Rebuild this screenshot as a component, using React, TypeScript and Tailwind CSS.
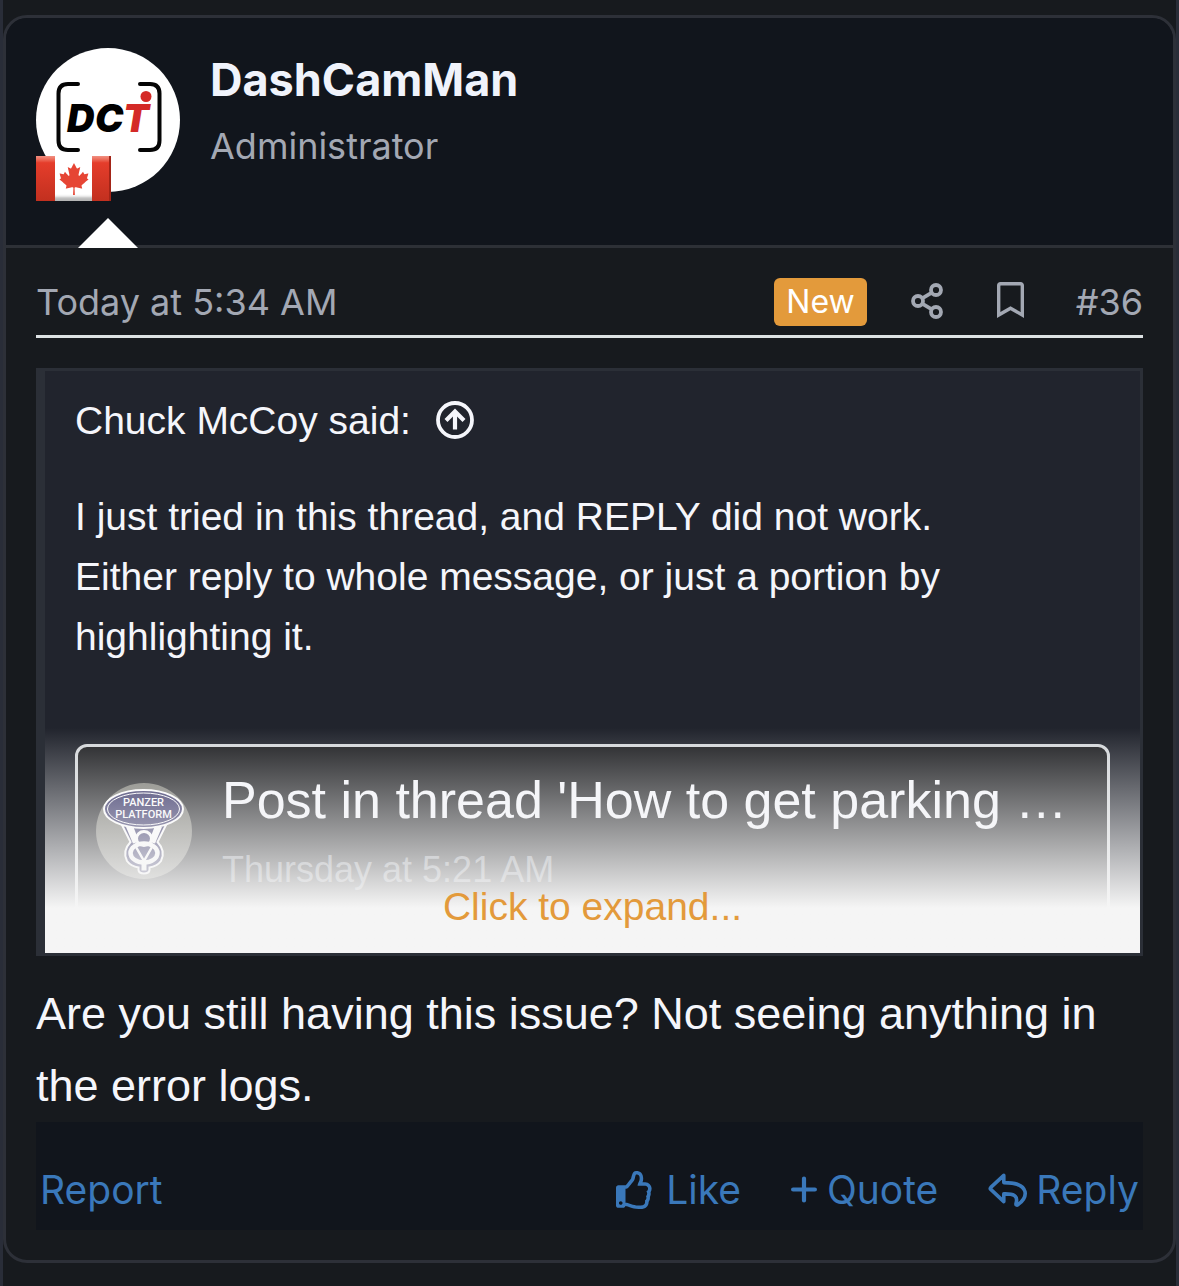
import { FaCanadianMapleLeaf, FaRegBookmark, FaRegThumbsUp } from 'react-icons/fa';

const CircleUpIcon = () => (
  <svg className="size-10" viewBox="0 0 40 40" fill="none" stroke="currentColor" aria-hidden="true">
    <circle cx="20" cy="19" r="17" strokeWidth="3.8" />
    <path d="M11 19.5 20 10.5 29 19.5" strokeWidth="4.2" />
    <path d="M20 11.5V28.5" strokeWidth="4.2" />
  </svg>
);

const ShareIcon = () => (
  <svg className="h-10 w-9" viewBox="0 0 36 40" fill="none" stroke="currentColor" strokeWidth="3.8" aria-hidden="true">
    <circle cx="9" cy="19" r="5" />
    <circle cx="27" cy="8" r="5" />
    <circle cx="27" cy="30" r="5" />
    <path d="M13.2 16.3 22.8 10.700M13.2 21.700 22.8 27.3" />
  </svg>
);

const PlusIcon = () => (
  <svg className="size-7" viewBox="0 0 28 28" fill="none" stroke="currentColor" strokeWidth="4.2" strokeLinecap="round" aria-hidden="true">
    <path d="M13 2.600V24.4M2.100 13.5H23.900" />
  </svg>
);

const ReplyIcon = () => (
  <svg className="h-9 w-10" viewBox="0 0 40 36" fill="none" stroke="currentColor" strokeWidth="3.6" strokeLinejoin="round" aria-hidden="true">
    <path d="M15.8 3.4 2.8 15.4Q1.8 16.4 2.8 17.4L15.8 29.6V21.9C25 21.6 30.6 23.4 28 31.6C27.7 33 28.8 33.6 30 32.6C35 29 38 24.5 37 19.6C35.2 12.2 26.5 10.7 15.8 10.6Z" />
  </svg>
);

const SiteLogo = () => (
  <svg className="size-36 rounded-full bg-white" viewBox="0 0 144 144" role="img" aria-label="DashCamMan">
    <g fill="none" stroke="#050505" strokeWidth="4" strokeLinecap="round">
      <path d="M42 36H32Q22.5 36 22.5 45.5V92.5Q22.5 102 32 102H42" />
      <path d="M104 36H114Q123.5 36 123.5 45.5V92.5Q123.5 102 114 102H104" />
    </g>
    <g fontFamily="Inter, sans-serif" fontSize="38" fontWeight="900" fontStyle="italic">
      <text x="31" y="84">D</text>
      <text x="59" y="84">C</text>
      <text x="87" y="84" fill="#d42a27">T</text>
    </g>
    <circle cx="110" cy="48.5" r="5.5" fill="#d42a27" />
  </svg>
);

const CanadaFlag = () => (
  <div className="flex h-[45px] w-[75px] items-stretch bg-white shadow-[inset_0_-4px_3px_#7778,inset_0_3px_2px_#fff8]">
    <div className="w-[19px] bg-linear-to-b from-[#f09082] via-[#e53d2b] via-15% to-[#c2301f]" />
    <div className="flex flex-1 items-center justify-center">
      <FaCanadianMapleLeaf className="size-8 text-[#e64534]" />
    </div>
    <div className="w-[19px] border-r-2 border-[#a32417] bg-linear-to-b from-[#f09082] via-[#e53d2b] via-15% to-[#c2301f]" />
  </div>
);

const PanzerLogo = () => (
  <svg className="size-24 shrink-0 rounded-full bg-[#76766f]" viewBox="0 0 96 96" role="img" aria-label="Panzer Platform">
    <path
      d="M26 42 34.500 59Q26 68 31 78Q35 83.500 42.500 84.500V87Q43 90.500 48 90.500Q53 90.500 53.500 87V84.500Q61 83.500 65 78Q70 68 61.500 59L70 42Z"
      fill="#25225a"
      stroke="#fff"
      strokeWidth="2"
    />
    <path d="M30 44H37.500Q40 51 42 55L40.500 59.500L37 60.500ZM66 44H58.500Q56 51 54 55L55.500 59.500L59 60.500Z" fill="#fff" />
    <ellipse cx="48" cy="55.500" rx="7.500" ry="7" fill="none" stroke="#fff" strokeWidth="3" />
    <ellipse cx="48" cy="70" rx="13.500" ry="9.500" fill="none" stroke="#fff" strokeWidth="4.500" />
    <path d="M40 64 48 78 56 64" fill="none" stroke="#fff" strokeWidth="2.500" />
    <path d="M45.500 81V87.500H50.500V81Z" fill="#fff" />
    <ellipse cx="47.500" cy="26" rx="39.500" ry="19" fill="#25225a" stroke="#fff" strokeWidth="2" />
    <ellipse cx="47.500" cy="26" rx="36" ry="16" fill="none" stroke="#fff" strokeWidth="1" />
    <g fill="#fff" fontFamily="Roboto, sans-serif" fontSize="11" fontWeight="500" textAnchor="middle">
      <text x="47.500" y="23">PANZER</text>
      <text x="47.500" y="35">PLATFORM</text>
    </g>
  </svg>
);

const MessageUser = () => (
  <header className="relative flex gap-[30px] border-b-3 border-[#2d3036] bg-[#11151c] px-[30px] pt-[30px] pb-[53px]">
    <div className="relative shrink-0">
      <a href="#profile">
        <SiteLogo />
      </a>
      <div className="absolute top-[108px] left-0">
        <CanadaFlag />
      </div>
    </div>
    <div className="flex flex-col gap-2">
      <h4 className="text-[45px] leading-16 font-bold text-[#f0f3fb]">
        <a href="#profile">DashCamMan</a>
      </h4>
      <h5 className="text-[36px] leading-[52px] text-[#a3a8b3]">Administrator</h5>
    </div>
    <svg className="absolute -bottom-[3px] left-[72px] h-[30px] w-[60px]" viewBox="0 0 60 30" aria-hidden="true">
      <path d="M0 30 30 0 60 30Z" fill="#fff" />
    </svg>
  </header>
);

const Attribution = () => (
  <div className="flex items-center justify-between border-b-3 border-[#dde2e4] pb-[9px] text-[36px] leading-12 text-[#a3a8b3]">
    <a href="#post-36">
      <time>Today at 5:34 AM</time>
    </a>
    <ul className="flex items-center">
      <li className="rounded-md bg-[#e39a3b] px-3 text-[32px] text-white">New</li>
      <li className="ml-[42px]">
        <a href="#share" aria-label="Share">
          <ShareIcon />
        </a>
      </li>
      <li className="ml-[52px]">
        <a href="#bookmark" aria-label="Add bookmark">
          <FaRegBookmark className="mb-1 h-9 w-[27px]" />
        </a>
      </li>
      <li className="ml-[52px]">
        <a href="#post-36">#36</a>
      </li>
    </ul>
  </div>
);

const Quote = () => (
  <blockquote className="relative mt-[30px] h-[588px] overflow-hidden border-3 border-l-9 border-[#2b2f37] bg-[#21242d] px-[30px] pt-5 font-['Liberation_Sans',sans-serif] text-[39px] leading-[60px] text-[#f5f6fb]">
    <a href="#source" className="flex items-center gap-6">
      Chuck McCoy said:
      <CircleUpIcon />
    </a>
    <p className="mt-9">
      I just tried in this thread, and REPLY did not work.
      <br />
      Either reply to whole message, or just a portion by
      <br />
      highlighting it.
    </p>
    <div className="mt-[77px] flex items-start gap-[30px] rounded-xl border-3 border-[#d4d7da] bg-[#1c1d20] px-[18px] pt-5 pb-16">
      <div className="pt-4">
        <PanzerLogo />
      </div>
      <div className="min-w-0">
        <h3 className="truncate text-[52px] leading-[66px]">
          <a href="#thread">Post in thread &apos;How to get parking …</a>
        </h3>
        <div className="pt-1 text-[36px] leading-[66px] text-[#7f848c]">Thursday at 5:21 AM</div>
      </div>
    </div>
    <div className="absolute inset-x-0 bottom-0 flex h-[225px] items-end justify-center bg-linear-to-b from-[#f5f5f500] to-[#f5f5f5] to-80% pb-4">
      <button type="button" className="cursor-pointer text-[#e39a3b]">
        Click to expand...
      </button>
    </div>
  </blockquote>
);

const ActionBar = () => (
  <footer className="flex items-center justify-between bg-[#11151c] px-1 pt-[38px] pb-[10px] text-[39px] leading-[60px] text-[#3a78ba]">
    <a href="#report">Report</a>
    <div className="flex items-center gap-[50px]">
      <a href="#like" className="flex items-center gap-3">
        <FaRegThumbsUp className="size-[38px]" />
        Like
      </a>
      <a href="#quote" className="flex items-center gap-2">
        <PlusIcon />
        Quote
      </a>
      <a href="#reply" className="flex items-center gap-2">
        <ReplyIcon />
        Reply
      </a>
    </div>
  </footer>
);

export default function App() {
  return (
    <main className="min-h-screen border-x-3 border-[#292d38] bg-[#171a1e] pt-[15px] font-[Inter,sans-serif]">
      <article className="overflow-hidden rounded-3xl border-3 border-[#2d3038]">
        <MessageUser />
        <div className="p-[30px]">
          <Attribution />
          <Quote />
          <p className="pt-[22px] font-['Liberation_Sans',sans-serif] text-[45px] leading-18 text-[#f5f6fb]">
            Are you still having this issue? Not seeing anything in the error logs.
          </p>
          <ActionBar />
        </div>
      </article>
    </main>
  );
}
